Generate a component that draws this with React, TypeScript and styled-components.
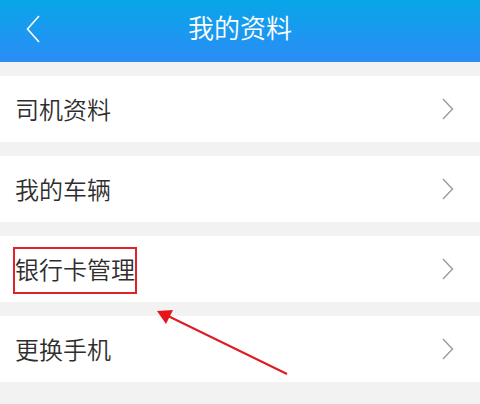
import React from "react";
import styled, { createGlobalStyle } from "styled-components";

const Global = createGlobalStyle`
  html, body { margin: 0; padding: 0; background: #f2f2f2; }
  body { font-family: "Noto Sans CJK SC", "Noto Sans", sans-serif; }
  * { box-sizing: border-box; }
`;

const Page = styled.div`
  position: relative;
  width: 480px;
  height: 404px;
  overflow: hidden;
  background: #f2f2f2;
  display: flex;
  flex-direction: column;
`;

const Header = styled.header`
  height: 62px;
  flex: none;
  background: linear-gradient(180deg, #08a6e8 0%, #2b8cf7 100%);
  display: grid;
  grid-template-columns: 64px 1fr 64px;
  align-items: center;
`;

const BackButton = styled.button`
  border: 0;
  background: none;
  padding: 0 0 0 26px;
  height: 100%;
  display: flex;
  align-items: center;
  margin-top: -4px;
`;

const Title = styled.h1`
  margin: 0;
  text-align: center;
  color: #fff;
  font-size: 26px;
  font-weight: 350;
  line-height: 26px;
  margin-top: -8px;
`;

const List = styled.div`
  display: flex;
  flex-direction: column;
  gap: 14px;
  padding-top: 14px;
`;

const Row = styled.div`
  height: 66px;
  background: #fff;
  display: flex;
  align-items: center;
  justify-content: space-between;
  padding: 0 26px 0 15px;
`;

const Label = styled.span<{ $highlighted?: boolean }>`
  position: relative;
  display: block;
  font-size: 24px;
  font-weight: 350;
  color: #2e2e2e;
  line-height: 24px;
  ${(p) =>
    p.$highlighted &&
    `
    &::after {
      content: "";
      position: absolute;
      left: -2px;
      right: -2px;
      top: -10px;
      bottom: -13px;
      border: 2px solid #e0232b;
    }
  `}
`;

const Arrow = styled.svg`
  position: absolute;
  left: 0;
  top: 0;
  pointer-events: none;
`;

const items = ["司机资料", "我的车辆", "银行卡管理", "更换手机"];

export default function App() {
  return (
    <>
      <Global />
      <Page>
        <Header>
          <BackButton aria-label="返回">
            <svg width="15" height="28" viewBox="0 0 15 28">
              <polyline points="13,1 1.5,14 13,27" fill="none" stroke="#fff" strokeWidth="1.6" />
            </svg>
          </BackButton>
          <Title>我的资料</Title>
          <span />
        </Header>
        <List>
          {items.map((t) => (
            <Row key={t}>
              <Label $highlighted={t === "银行卡管理"}>{t}</Label>
              <svg width="12" height="22" viewBox="0 0 12 22">
                <polyline points="1,1 10.5,11 1,21" fill="none" stroke="#9a9a9a" strokeWidth="1.4" />
              </svg>
            </Row>
          ))}
        </List>
        <Arrow width="480" height="404" viewBox="0 0 480 404">
          <line x1="287" y1="374" x2="166" y2="315" stroke="#de1b22" strokeWidth="2" />
          <polygon points="157,311 173,310 166,324" fill="#e8141c" />
        </Arrow>
      </Page>
    </>
  );
}
